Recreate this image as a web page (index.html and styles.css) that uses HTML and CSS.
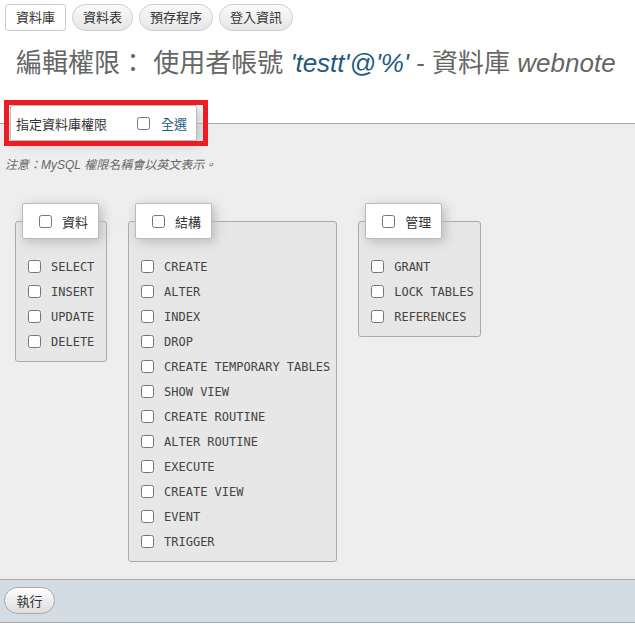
FILE: index.html
```html
<!DOCTYPE html>
<html lang="zh-Hant">
<head>
<meta charset="utf-8">
<title>編輯權限</title>
<link rel="stylesheet" href="styles.css">
</head>
<body>
<nav class="tabs">
  <a class="tab tab-active">資料庫</a>
  <a class="tab">資料表</a>
  <a class="tab">預存程序</a>
  <a class="tab">登入資訊</a>
</nav>
<h2 class="title">編輯權限： 使用者帳號 <i class="user">'testt'@'%'</i> - 資料庫 <i>webnote</i></h2>
<div class="main">
  <div class="main-legend">
    <span>指定資料庫權限</span>
    <input type="checkbox" class="cb main-cb">
    <span class="link">全選</span>
  </div>
  <div class="highlight"></div>
  <p class="note">注意：MySQL 權限名稱會以英文表示。</p>
  <div class="groups">
    <div class="group">
      <div class="group-legend"><input type="checkbox" class="cb"><span>資料</span></div>
      <ul class="items">
        <li><input type="checkbox" class="cb"><span>SELECT</span></li>
        <li><input type="checkbox" class="cb"><span>INSERT</span></li>
        <li><input type="checkbox" class="cb"><span>UPDATE</span></li>
        <li><input type="checkbox" class="cb"><span>DELETE</span></li>
      </ul>
    </div>
    <div class="group">
      <div class="group-legend"><input type="checkbox" class="cb"><span>結構</span></div>
      <ul class="items">
        <li><input type="checkbox" class="cb"><span>CREATE</span></li>
        <li><input type="checkbox" class="cb"><span>ALTER</span></li>
        <li><input type="checkbox" class="cb"><span>INDEX</span></li>
        <li><input type="checkbox" class="cb"><span>DROP</span></li>
        <li><input type="checkbox" class="cb"><span>CREATE TEMPORARY TABLES</span></li>
        <li><input type="checkbox" class="cb"><span>SHOW VIEW</span></li>
        <li><input type="checkbox" class="cb"><span>CREATE ROUTINE</span></li>
        <li><input type="checkbox" class="cb"><span>ALTER ROUTINE</span></li>
        <li><input type="checkbox" class="cb"><span>EXECUTE</span></li>
        <li><input type="checkbox" class="cb"><span>CREATE VIEW</span></li>
        <li><input type="checkbox" class="cb"><span>EVENT</span></li>
        <li><input type="checkbox" class="cb"><span>TRIGGER</span></li>
      </ul>
    </div>
    <div class="group">
      <div class="group-legend"><input type="checkbox" class="cb"><span>管理</span></div>
      <ul class="items">
        <li><input type="checkbox" class="cb"><span>GRANT</span></li>
        <li><input type="checkbox" class="cb"><span>LOCK TABLES</span></li>
        <li><input type="checkbox" class="cb"><span>REFERENCES</span></li>
      </ul>
    </div>
  </div>
</div>
<div class="footer">
  <button class="btn">執行</button>
</div>
</body>
</html>
```
FILE: styles.css
```css
html, body {
  margin: 0;
  padding: 0;
  background: #fff;
}
body {
  font-family: "Liberation Sans", "Noto Sans CJK TC", sans-serif;
  font-size: 13px;
  color: #444;
  position: relative;
}
.tabs {
  display: flex;
  gap: 6px;
  padding: 4px 5px 0;
}
.tab {
  display: block;
  height: 17px;
  line-height: 17px;
  padding: 4px 10px;
  border: 1px solid #ccc;
  border-radius: 14px;
  background: linear-gradient(#fafafa, #e6e6e6);
  color: #333;
  font-size: 13px;
  white-space: nowrap;
}
.tab-active {
  background: #fff;
  border-radius: 3px;
}
.title {
  margin: 17px 0 0 16px;
  font-size: 26px;
  line-height: 30px;
  font-weight: normal;
  color: #666;
  white-space: nowrap;
}
.title i {
  font-style: italic;
}
.user {
  color: #235a81;
}
.main {
  margin-top: 45px;
  border-top: 1px solid #aaa;
  background: #eee;
  padding: 0 0 17px;
}
.main-legend {
  display: flex;
  align-items: center;
  width: fit-content;
  height: 34px;
  margin: -19px 0 0 10px;
  padding: 0 9px 0 5px;
  background: #fff;
  border: 1px solid #bbb;
  border-radius: 2px;
  box-shadow: 3px 3px 12px #bbb;
  color: #333;
  position: relative;
}
.cb {
  width: 13px;
  height: 13px;
  margin: 0;
  flex: none;
}
.main-cb {
  margin-left: 30px;
  margin-right: 11px;
}
.link {
  color: #235a81;
}
.highlight {
  position: absolute;
  left: 4px;
  top: 100px;
  width: 194px;
  height: 36px;
  border: 5px solid #ed1c24;
  pointer-events: none;
}
.note {
  margin: 16px 0 0 5px;
  font-size: 12px;
  line-height: 16px;
  font-style: italic;
  color: #666;
}
.groups {
  display: flex;
  align-items: flex-start;
  gap: 21px;
  padding-left: 15px;
  margin-top: 48px;
}
.group {
  border: 1px solid #aaa;
  border-radius: 3px;
  background: #e7e7e7;
  padding: 0 0 7px 0;
}
.group-legend {
  display: flex;
  align-items: center;
  width: fit-content;
  height: 34px;
  margin: -19px 7px 0 6px;
  padding: 0 10px 0 16px;
  background: #fff;
  border: 1px solid #bbb;
  border-radius: 2px;
  box-shadow: 3px 3px 12px #bbb;
  color: #333;
  gap: 10px;
}
.items {
  list-style: none;
  margin: 15px 0 0;
  padding: 0 6px 0 12px;
}
.items li {
  display: flex;
  align-items: center;
  gap: 10px;
  height: 25px;
  font-family: "DejaVu Sans Mono", "Liberation Mono", monospace;
  font-size: 12px;
  color: #444;
  white-space: nowrap;
}
.footer {
  border-top: 1px solid #aaa;
  border-bottom: 1px solid #aaa;
  background: #d3dce3;
  padding: 7px 4px 8px;
}
.btn {
  display: block;
  width: 51px;
  height: 27px;
  margin: 0;
  padding: 0;
  border: 1px solid #aaa;
  border-radius: 14px;
  background: linear-gradient(#fff, #ddd);
  font-family: "Liberation Sans", "Noto Sans CJK TC", sans-serif;
  font-size: 13px;
  color: #333;
}
```
